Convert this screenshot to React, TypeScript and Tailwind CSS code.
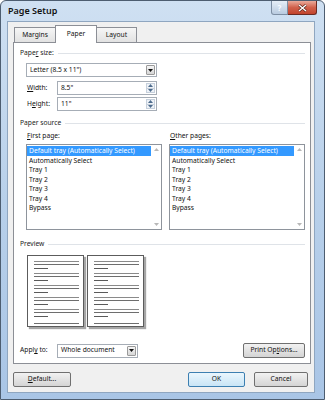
import React from 'react';

const trays = [
  'Default tray (Automatically Select)',
  'Automatically Select',
  'Tray 1',
  'Tray 2',
  'Tray 3',
  'Tray 4',
  'Bypass',
];

function Heading({ children }: { children: React.ReactNode }) {
  return (
    <div className="flex items-center h-[10px] pl-[6px] pr-[5px] gap-[4px]">
      <span className="text-[#1c1c1c]">{children}</span>
      <div className="flex-1 h-px bg-[#dfe3e8]" />
    </div>
  );
}

function Arrow() {
  return (
    <div className="w-[9px] my-px mr-px border border-[#9a9a9a] rounded-[1px] bg-linear-to-b from-[#f5f5f5] to-[#d6d6d6] flex items-center justify-center">
      <svg width="5" height="3" viewBox="0 0 5 3">
        <path d="M0 0h5L2.5 3z" fill="#111" />
      </svg>
    </div>
  );
}

function Combo({ value, className }: { value: string; className: string }) {
  return (
    <div className={`flex h-[14px] bg-white border border-[#a6adb6] ${className}`}>
      <div className="flex-1 flex items-center pl-[3px]">{value}</div>
      <Arrow />
    </div>
  );
}

function Spin({ value }: { value: string }) {
  return (
    <div className="flex w-[100px] h-[14px] bg-white border border-[#a6adb6]">
      <div className="flex-1 flex items-center pl-[3px]">{value}</div>
      <div className="w-[9px] flex flex-col my-px mr-px">
        <div className="flex-1 flex items-center justify-center bg-[#eef2f7] border border-[#c6d0dc]">
          <svg width="5" height="3" viewBox="0 0 5 3">
            <path d="M0 3h5L2.5 0z" fill="#4d6b8c" />
          </svg>
        </div>
        <div className="flex-1 flex items-center justify-center bg-[#eef2f7] border border-t-0 border-[#c6d0dc]">
          <svg width="5" height="3" viewBox="0 0 5 3">
            <path d="M0 0h5L2.5 3z" fill="#4d6b8c" />
          </svg>
        </div>
      </div>
    </div>
  );
}

function ListBox() {
  return (
    <div className="flex h-[86px] bg-white border border-[#8e949c]">
      <div className="flex-1 pt-px">
        {trays.map((t, i) => (
          <div
            key={t}
            className={`h-[9.5px] leading-[9.5px] pl-[2px] whitespace-nowrap ${i === 0 ? 'bg-[#3399ff] text-white' : 'text-[#111]'}`}
          >
            {t}
          </div>
        ))}
      </div>
      <div className="w-[10px] flex flex-col justify-between items-center py-[3px]">
        <svg width="5" height="3" viewBox="0 0 5 3">
          <path d="M0 3h5L2.5 0z" fill="#b8b8b8" />
        </svg>
        <svg width="5" height="3" viewBox="0 0 5 3">
          <path d="M0 0h5L2.5 3z" fill="#b8b8b8" />
        </svg>
      </div>
    </div>
  );
}

function PreviewPage() {
  return (
    <div className="w-[57px] h-[72px] bg-white border border-[#5c5c5c] shadow-[2px_2px_1px_rgba(0,0,0,0.35)] pt-[5px] pl-[6px] pr-[4px] flex flex-col gap-[4px]">
      {[0, 1, 2, 3, 4].map((g) => (
        <div key={g} className="flex flex-col">
          <div className="h-px bg-[#8a8a8a]" />
          <div className="h-px bg-[#6e6e6e] mt-[2px]" />
          <div className="h-px w-[14px] bg-[#5a5a5a] mt-[3px]" />
        </div>
      ))}
      <div className="h-px bg-[#6e6e6e] mt-[2px]" />
    </div>
  );
}

function Button({ children, className, primary }: { children: React.ReactNode; className: string; primary?: boolean }) {
  return (
    <div
      className={`h-[15px] flex items-center justify-center rounded-[2px] border ${primary ? 'border-[#3c7fb1] bg-linear-to-b from-[#eaf6fd] to-[#c9e5f6]' : 'border-[#707070] bg-linear-to-b from-[#f2f2f2] to-[#d4d4d4]'} ${className}`}
    >
      {children}
    </div>
  );
}

export default function App() {
  return (
    <div className="w-[325px] h-[400px] bg-white font-['Noto_Sans',sans-serif] text-[6.7px] text-[#111]">
      <div className="relative w-full h-full flex flex-col rounded-t-[6px] border border-[#4d5d70] bg-linear-to-b from-[#cfe0f2] via-[#b8d0ea] to-[#a9c5e6]">
        <div className="h-[21px] flex items-center pl-[7px]">
          <span className="text-[9px] font-semibold text-[#111]">Page Setup</span>
        </div>
        <div className="absolute top-0 right-[7px] flex">
          <div className="w-[17px] h-[14px] rounded-bl-[3px] border border-t-0 border-[#7d8ea3] bg-linear-to-b from-[#e6eef7] to-[#b9cbe0] flex items-center justify-center text-[8px] font-bold text-[#f8fbff]">
            ?
          </div>
          <div className="w-[29px] h-[14px] rounded-br-[3px] border border-t-0 border-l-0 border-[#6b2a22] bg-linear-to-b from-[#e9a99b] via-[#d0604b] to-[#c2432c] flex items-center justify-center">
            <svg width="9" height="8" viewBox="0 0 9 8">
              <path d="M1 1l7 6M8 1L1 7" stroke="#4a1a12" strokeWidth="2.6" />
              <path d="M1 1l7 6M8 1L1 7" stroke="#fff" strokeWidth="1.5" />
            </svg>
          </div>
        </div>

        <div className="flex-1 ml-[6px] mr-[9px] mb-[6px] bg-[#f0f0f0] border border-[#8fa6c0] flex flex-col pt-[3px] pl-[5px] pr-[3px] pb-[5px]">
          <div className="flex items-end pl-px h-[17px]">
            <div className="w-[42px] h-[15px] border border-b-0 border-[#8c8f96] bg-linear-to-b from-[#f6f6f6] to-[#e2e2e2] flex items-center justify-center">
              Margins
            </div>
            <div className="relative z-10 -mb-px w-[42px] h-[18px] -mx-px border border-b-0 border-[#8c8f96] bg-white flex items-center justify-center pb-px">
              Paper
            </div>
            <div className="w-[41px] h-[15px] border border-b-0 border-[#8c8f96] bg-linear-to-b from-[#f6f6f6] to-[#e2e2e2] flex items-center justify-center">
              Layout
            </div>
          </div>

          <div className="h-[322px] bg-white border border-[#8c8f96] flex flex-col">
            <div className="mt-[5px]">
              <Heading>
                Pape<span className="underline">r</span> size:
              </Heading>
            </div>
            <div className="mt-[5px] pl-[12px]">
              <Combo value={'Letter (8.5 x 11")'} className="w-[131px]" />
            </div>
            <div className="mt-[4px] pl-[13px] flex items-center">
              <span className="w-[30px]">
                <span className="underline">W</span>idth:
              </span>
              <Spin value={'8.5"'} />
            </div>
            <div className="mt-[2px] pl-[13px] flex items-center">
              <span className="w-[30px]">
                H<span className="underline">e</span>ight:
              </span>
              <Spin value={'11"'} />
            </div>

            <div className="mt-[7px]">
              <Heading>Paper source</Heading>
            </div>
            <div className="mt-[3px] pl-[12px] pr-[5px] grid grid-cols-2 gap-x-[7px]">
              <div className="h-[10px] flex items-center pl-px">
                <span>
                  <span className="underline">F</span>irst page:
                </span>
              </div>
              <div className="h-[10px] flex items-center pl-px">
                <span>
                  <span className="underline">O</span>ther pages:
                </span>
              </div>
              <div className="mt-[3px]">
                <ListBox />
              </div>
              <div className="mt-[3px]">
                <ListBox />
              </div>
            </div>

            <div className="mt-[9px]">
              <Heading>Preview</Heading>
            </div>
            <div className="mt-[6px] pl-[13px] flex gap-[3px]">
              <PreviewPage />
              <PreviewPage />
            </div>

            <div className="mt-[16px] pl-[6px] pr-[5px] flex items-center">
              <span className="w-[37px]">
                Appl<span className="underline">y</span> to:
              </span>
              <Combo value="Whole document" className="w-[81px]" />
              <div className="flex-1" />
              <Button className="w-[62px] h-[14px]">
                Print Op<span className="underline">t</span>ions...
              </Button>
            </div>
          </div>

          <div className="mt-[8px] flex items-center">
            <Button className="w-[58px]">
              <span className="underline">D</span>efault...
            </Button>
            <div className="flex-1" />
            <Button primary className="w-[57px]">
              OK
            </Button>
            <Button className="w-[54px] ml-[9px] mr-[3px]">Cancel</Button>
          </div>
        </div>
      </div>
    </div>
  );
}
